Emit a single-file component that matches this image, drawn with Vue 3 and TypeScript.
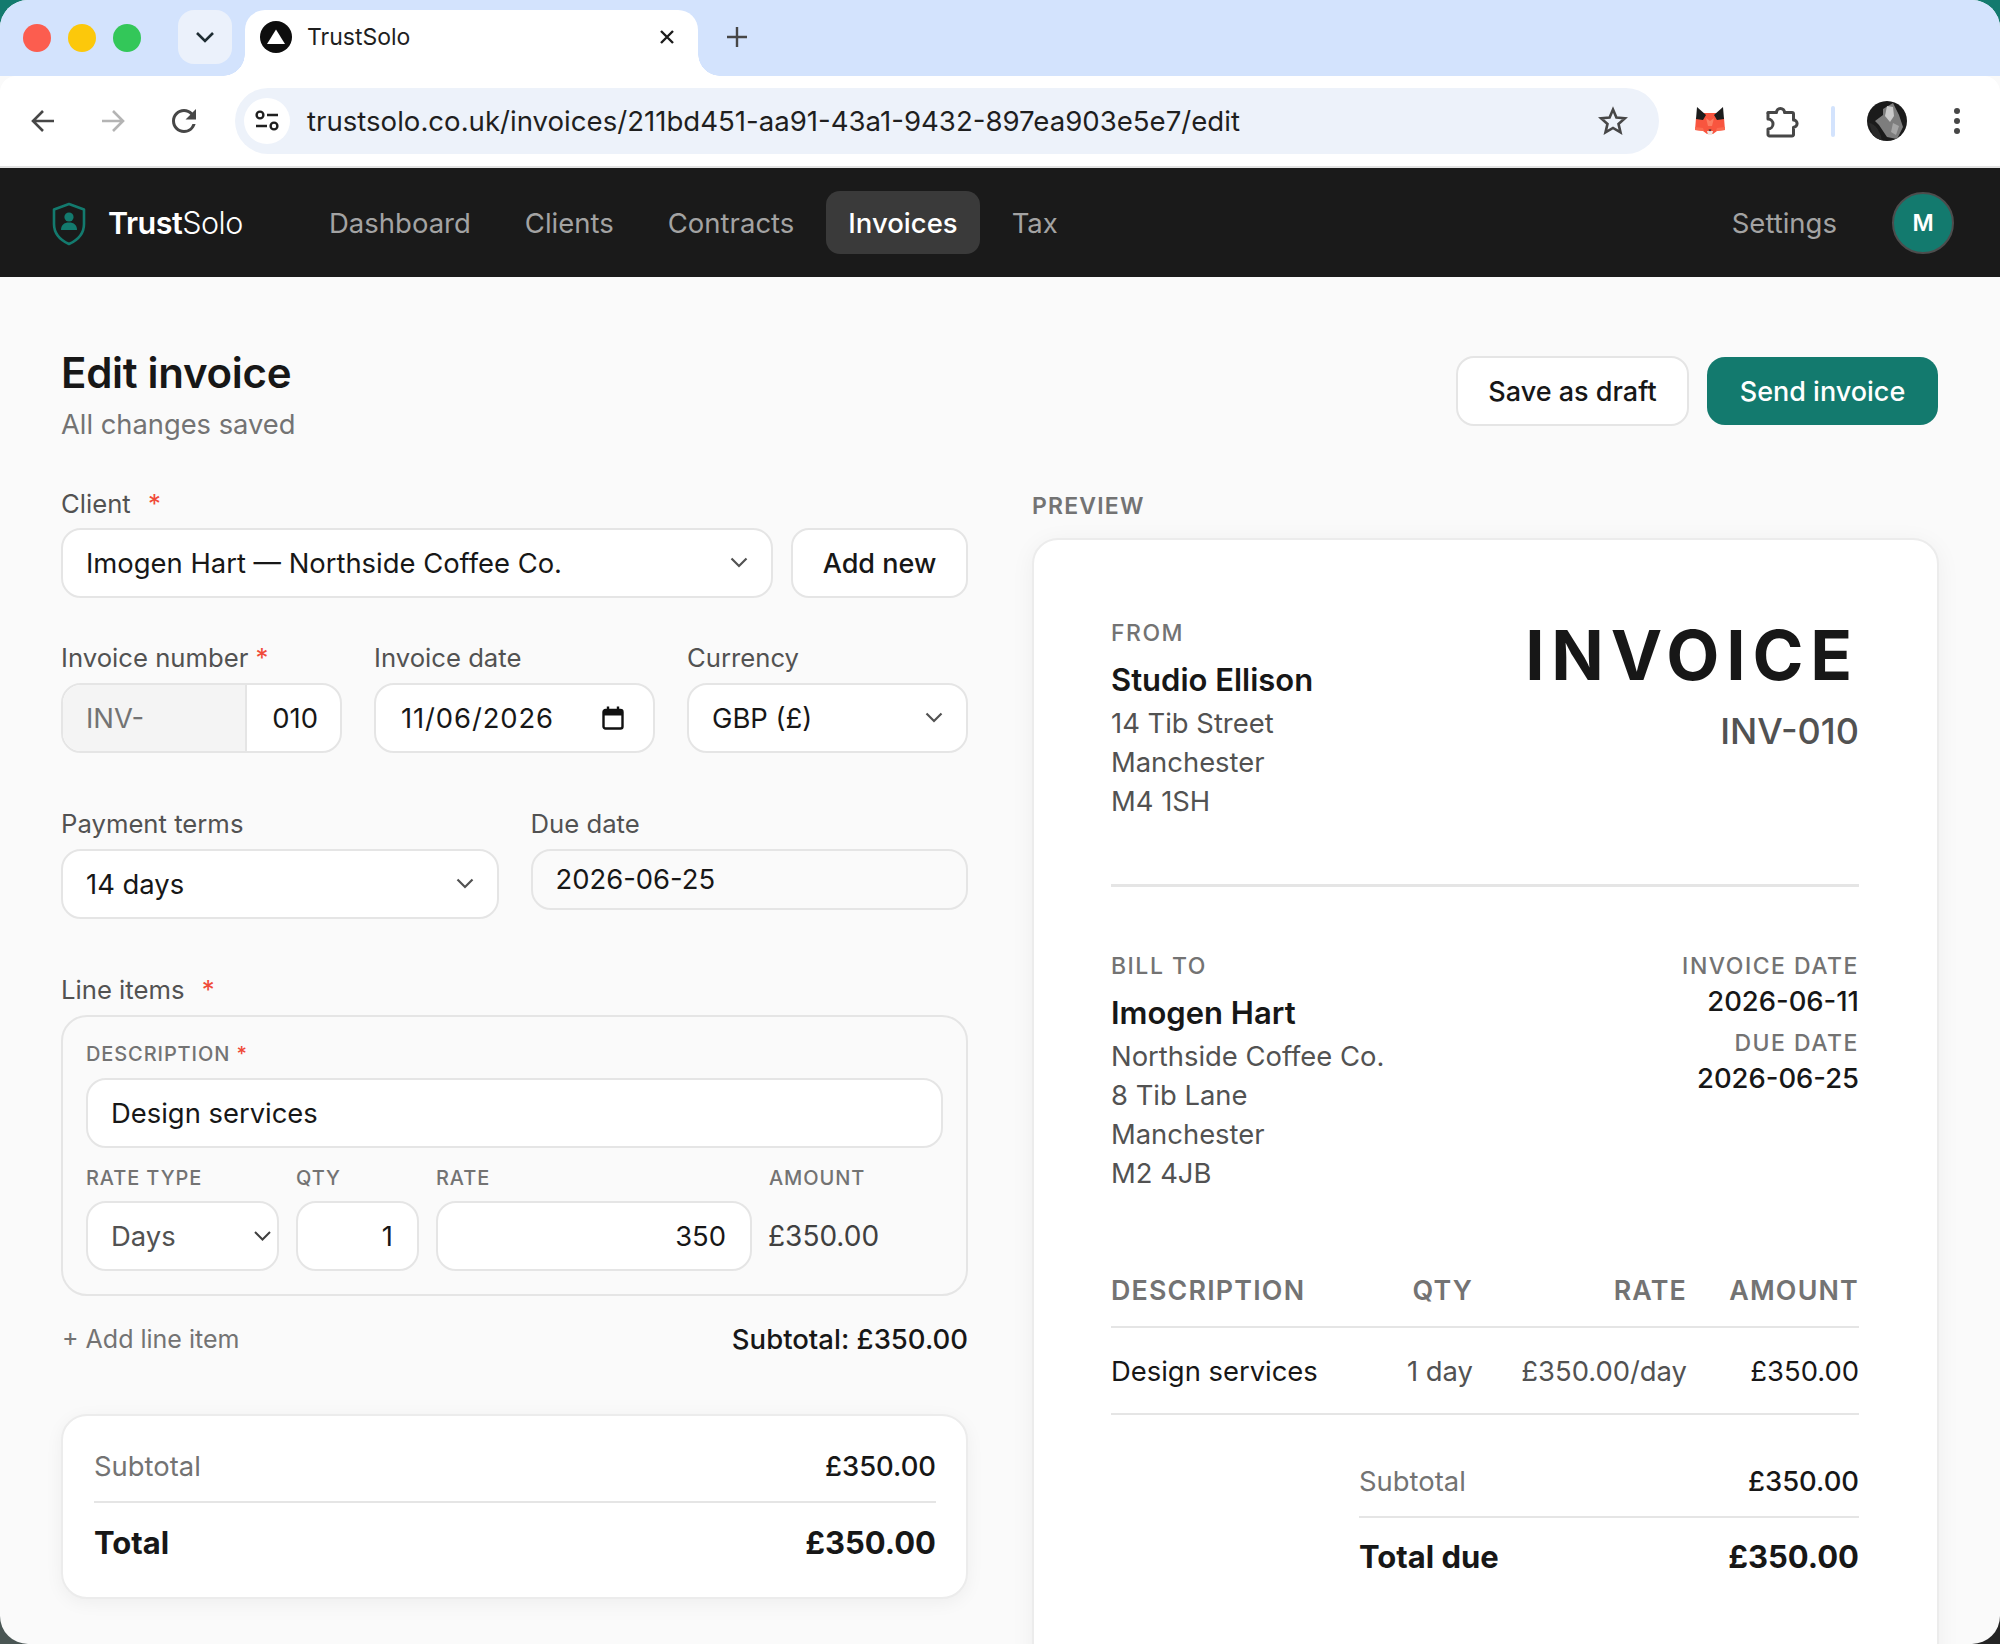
<script setup lang="ts">
const navLinks = [
  { label: 'Dashboard', active: false },
  { label: 'Clients', active: false },
  { label: 'Contracts', active: false },
  { label: 'Invoices', active: true },
  { label: 'Tax', active: false },
]

const fromLines = ['14 Tib Street', 'Manchester', 'M4 1SH']
const billLines = ['Northside Coffee Co.', '8 Tib Lane', 'Manchester', 'M2 4JB']
</script>

<template>
  <div class="desktop">
    <div class="window">
      <div class="tabstrip">
        <div class="lights">
          <span class="light light--red"></span>
          <span class="light light--yellow"></span>
          <span class="light light--green"></span>
        </div>
        <div class="tab-search">
          <svg width="20" height="12" viewBox="0 0 20 12" fill="none">
            <path d="M2 2l8 8 8-8" stroke="#1f2d33" stroke-width="2.6" />
          </svg>
        </div>
        <div class="tab">
          <svg class="favicon" width="32" height="32" viewBox="0 0 32 32">
            <circle cx="16" cy="16" r="16" fill="#0d0d0d" />
            <path d="M16 8.5L25 23H7z" fill="#fff" />
          </svg>
          <span class="tab__title">TrustSolo</span>
          <svg width="16" height="16" viewBox="0 0 16 16" fill="none">
            <path d="M2 2l12 12M14 2L2 14" stroke="#1c1c1c" stroke-width="2.4" />
          </svg>
        </div>
        <svg class="tab-new" width="20" height="20" viewBox="0 0 20 20" fill="none">
          <path d="M10 0v20M0 10h20" stroke="#474747" stroke-width="2.4" />
        </svg>
      </div>

      <div class="toolbar">
        <svg class="tool tool--back" width="24" height="24" viewBox="0 0 24 24" fill="none">
          <path d="M23 12H2M12 2L2 12l10 10" stroke="#474747" stroke-width="2.6" />
        </svg>
        <svg class="tool tool--forward" width="24" height="24" viewBox="0 0 24 24" fill="none">
          <path d="M1 12h21M12 2l10 10-10 10" stroke="#b4b4b4" stroke-width="2.6" />
        </svg>
        <svg class="tool tool--reload" width="24" height="24" viewBox="4 4 16 16">
          <path
            fill="#474747"
            d="M17.65 6.35A7.958 7.958 0 0 0 12 4c-4.42 0-7.99 3.58-7.99 8s3.57 8 7.99 8c3.73 0 6.84-2.55 7.73-6h-2.08A5.99 5.99 0 0 1 12 18c-3.31 0-6-2.69-6-6s2.69-6 6-6c1.66 0 3.14.69 4.22 1.78L13 11h7V4l-2.35 2.35z"
          />
        </svg>
        <div class="omnibox">
          <div class="site-info">
            <svg width="24" height="22" viewBox="0 0 24 22" fill="none" stroke="#1f1f1f" stroke-width="2.4">
              <circle cx="5" cy="5" r="3.4" />
              <path d="M12 5h11M1 16h11" />
              <circle cx="19" cy="16" r="3.4" />
            </svg>
          </div>
          <span class="omnibox__url">trustsolo.co.uk/invoices/211bd451-aa91-43a1-9432-897ea903e5e7/edit</span>
          <svg class="omnibox__star" width="30" height="30" viewBox="0 0 30 30" fill="none">
            <path
              d="M15 3.5l3.4 8 8.6.7-6.5 5.7 2 8.5-7.5-4.5-7.5 4.5 2-8.5L3 12.2l8.6-.7z"
              stroke="#474747"
              stroke-width="2.6"
              stroke-linejoin="miter"
            />
          </svg>
        </div>
        <svg class="fox" width="30" height="28" viewBox="0 0 30 28">
          <path d="M1 11l7-5h14l7 5 1 12-8 1-4 3h-6l-4-3-8-1z" fill="#f8553f" />
          <path d="M2 0l9 8-3 5-7-1zM28 0l-9 8 3 5 7-1z" fill="#1c1c1c" />
          <path d="M11 11l4 3 4-3-2 8h-4z" fill="#fb7d62" />
          <path d="M0 20l8 1 1 3-9-1zM30 20l-8 1-1 3 9-1z" fill="#fb6a50" />
          <path d="M12 24h6l-1 4h-4z" fill="#efe9e6" />
          <path d="M13.500 22.500h3L15 24.500z" fill="#2a2a2a" />
        </svg>
        <svg class="puzzle" width="34" height="33" viewBox="0 0 34 33" fill="none">
          <path
            d="M3 7.5h8.5a4 4 0 0 1 8 0H27a1.500 1.500 0 0 1 1.500 1.500v6a3.600 3.600 0 0 1 0 7.200V30a1.500 1.500 0 0 1-1.500 1H4.500A1.500 1.500 0 0 1 3 29.500V24a5 5 0 0 0 0-10V9a1.500 1.500 0 0 1 0-1.500z"
            stroke="#474747"
            stroke-width="3"
            stroke-linejoin="round"
          />
        </svg>
        <span class="tool-sep"></span>
        <svg class="profile" width="40" height="40" viewBox="0 0 40 40">
          <defs>
            <filter id="soft"><feGaussianBlur stdDeviation="0.7" /></filter>
            <clipPath id="round"><circle cx="20" cy="20" r="20" /></clipPath>
          </defs>
          <g clip-path="url(#round)">
            <rect width="40" height="40" fill="#1b1b1b" />
            <g filter="url(#soft)">
              <path d="M16 8l10-6 6 12 4 12-6 12-10-2-8-12-4-4 8-6z" fill="#7d7d7d" />
              <path d="M20 5l6 1 1 9-4 6-5-6z" fill="#c9c9c9" />
              <path d="M26 22l6 3-3 9-5-3z" fill="#a5a5a5" />
              <path d="M2 22c6 1 11 7 13 18l-8-3z" fill="#2b2b2b" />
            </g>
          </g>
        </svg>
        <svg class="kebab" width="8" height="28" viewBox="0 0 8 28">
          <circle cx="4" cy="4" r="3" fill="#474747" />
          <circle cx="4" cy="14" r="3" fill="#474747" />
          <circle cx="4" cy="24" r="3" fill="#474747" />
        </svg>
      </div>

      <header class="nav">
        <div class="brand">
          <svg class="brand__mark" width="34" height="44" viewBox="0 0 34 44" fill="none">
            <path
              d="M17 2l15 5.5V22c0 9-6 16-15 20C8 38 2 31 2 22V7.500z"
              stroke="#137a6e"
              stroke-width="2.6"
              stroke-linejoin="round"
            />
            <circle cx="17" cy="15" r="4.600" fill="#137a6e" />
            <path d="M9 28c0-5 3-7.500 8-7.500s8 2.500 8 7.500z" fill="#137a6e" />
          </svg>
          <span class="brand__name"><b>Trust</b>Solo</span>
        </div>
        <nav class="nav__links">
          <a
            v-for="link in navLinks"
            :key="link.label"
            class="nav__link"
            :class="{ 'nav__link--active': link.active }"
          >{{ link.label }}</a>
        </nav>
        <a class="nav__settings">Settings</a>
        <div class="avatar">M</div>
      </header>

      <main class="page">
        <div class="page__head">
          <div>
            <h1 class="page__title">Edit invoice</h1>
            <p class="page__status">All changes saved</p>
          </div>
          <div class="page__actions">
            <button class="btn btn--ghost">Save as draft</button>
            <button class="btn btn--primary">Send invoice</button>
          </div>
        </div>

        <div class="columns">
          <section class="form">
            <div class="field">
              <label class="label">Client <em class="req req--wide">*</em></label>
              <div class="row row--client">
                <div class="control control--select">
                  <span>Imogen Hart — Northside Coffee Co.</span>
                  <svg class="chev" width="18" height="11" viewBox="0 0 18 11" fill="none">
                    <path d="M1.500 1.500L9 9l7.500-7.500" stroke="#525252" stroke-width="2.200" />
                  </svg>
                </div>
                <button class="btn btn--add">Add new</button>
              </div>
            </div>

            <div class="row row--invoice">
              <div class="field">
                <label class="label">Invoice number <em class="req">*</em></label>
                <div class="control control--prefixed">
                  <span class="prefix">INV-</span>
                  <span class="suffix">010</span>
                </div>
              </div>
              <div class="field">
                <label class="label">Invoice date</label>
                <div class="control control--date">
                  <span class="date-value">11/06/2026</span>
                  <svg width="22" height="24" viewBox="0 0 22 24" fill="none">
                    <rect x="1.500" y="4" width="19" height="18.500" rx="2" stroke="#111" stroke-width="2.400" />
                    <path d="M1.500 5h19v4.500h-19z" fill="#111" />
                    <path d="M6 .5v4M16 .5v4" stroke="#111" stroke-width="2.400" />
                  </svg>
                </div>
              </div>
              <div class="field">
                <label class="label">Currency</label>
                <div class="control control--select">
                  <span>GBP (£)</span>
                  <svg class="chev" width="18" height="11" viewBox="0 0 18 11" fill="none">
                    <path d="M1.500 1.500L9 9l7.500-7.500" stroke="#525252" stroke-width="2.200" />
                  </svg>
                </div>
              </div>
            </div>

            <div class="row row--terms">
              <div class="field">
                <label class="label">Payment terms</label>
                <div class="control control--select">
                  <span>14 days</span>
                  <svg class="chev" width="18" height="11" viewBox="0 0 18 11" fill="none">
                    <path d="M1.500 1.500L9 9l7.500-7.500" stroke="#525252" stroke-width="2.200" />
                  </svg>
                </div>
              </div>
              <div class="field">
                <label class="label">Due date</label>
                <div class="control control--short">2026-06-25</div>
              </div>
            </div>

            <div class="field field--lines">
              <label class="label">Line items <em class="req req--wide">*</em></label>
              <div class="line-card">
                <label class="micro">DESCRIPTION <em class="req">*</em></label>
                <div class="control control--desc">Design services</div>
                <div class="line-grid">
                  <label class="micro">RATE TYPE</label>
                  <label class="micro">QTY</label>
                  <label class="micro">RATE</label>
                  <label class="micro">AMOUNT</label>
                  <div class="control control--select control--days">
                    <span>Days</span>
                    <svg width="17" height="10" viewBox="0 0 17 10" fill="none">
                      <path d="M1 1l7.500 7.500L16 1" stroke="#3f3f3f" stroke-width="2" />
                    </svg>
                  </div>
                  <div class="control control--num">1</div>
                  <div class="control control--num">350</div>
                  <div class="line-amount">£350.00</div>
                </div>
              </div>
              <div class="line-foot">
                <a class="add-line">+ Add line item</a>
                <span class="line-subtotal">Subtotal: £350.00</span>
              </div>
            </div>

            <div class="summary">
              <div class="summary__row">
                <span class="muted">Subtotal</span>
                <span>£350.00</span>
              </div>
              <div class="summary__row summary__row--total">
                <span>Total</span>
                <span>£350.00</span>
              </div>
            </div>
          </section>

          <section class="preview">
            <div class="preview__label">PREVIEW</div>
            <article class="sheet">
              <div class="sheet__top">
                <div>
                  <div class="caps">FROM</div>
                  <div class="party">Studio Ellison</div>
                  <div v-for="line in fromLines" :key="line" class="addr">{{ line }}</div>
                </div>
                <div class="sheet__title">
                  <div class="big">INVOICE</div>
                  <div class="number">INV-010</div>
                </div>
              </div>

              <div class="sheet__bill">
                <div>
                  <div class="caps">BILL TO</div>
                  <div class="party">Imogen Hart</div>
                  <div v-for="line in billLines" :key="line" class="addr">{{ line }}</div>
                </div>
                <div class="dates">
                  <div class="caps">INVOICE DATE</div>
                  <div class="date">2026-06-11</div>
                  <div class="caps caps--second">DUE DATE</div>
                  <div class="date">2026-06-25</div>
                </div>
              </div>

              <div class="table">
                <div class="table__row table__row--head">
                  <span>DESCRIPTION</span>
                  <span>QTY</span>
                  <span>RATE</span>
                  <span>AMOUNT</span>
                </div>
                <div class="table__row table__row--body">
                  <span class="strong">Design services</span>
                  <span>1 day</span>
                  <span>£350.00/day</span>
                  <span class="strong">£350.00</span>
                </div>
              </div>

              <div class="totals">
                <div class="totals__row">
                  <span class="muted">Subtotal</span>
                  <span>£350.00</span>
                </div>
                <div class="totals__row totals__row--due">
                  <span>Total due</span>
                  <span>£350.00</span>
                </div>
              </div>
            </article>
          </section>
        </div>
      </main>
    </div>
  </div>
</template>

<style>
html,
body {
  margin: 0;
  background: #222;
}
</style>

<style scoped>
* {
  box-sizing: border-box;
}

.desktop {
  width: 2000px;
  height: 1644px;
  font-family: Inter, 'Liberation Sans', sans-serif;
  color: #171717;
  background:
    linear-gradient(#137a6e, #137a6e) 0 0 / 100% 50% no-repeat,
    linear-gradient(#4a5654, #4a5654) 0 100% / 50% 50% no-repeat,
    linear-gradient(#242424, #242424) 100% 100% / 50% 50% no-repeat;
}

.window {
  height: 100%;
  overflow: hidden;
  border-radius: 28px;
  background: #fafafa;
}

/* browser chrome */
.tabstrip {
  height: 76px;
  background: #d3e3fd;
  display: flex;
  align-items: flex-start;
}

.lights {
  display: flex;
  gap: 17px;
  padding: 24px 0 0 23px;
}

.light {
  width: 28px;
  height: 28px;
  border-radius: 50%;
}

.light--red {
  background: #fc5d4f;
}

.light--yellow {
  background: #fcc80b;
}

.light--green {
  background: #33c759;
}

.tab-search {
  width: 54px;
  height: 54px;
  margin: 10px 0 0 37px;
  border-radius: 16px;
  background: #ebf1fb;
  display: flex;
  align-items: center;
  justify-content: center;
}

.tab {
  position: relative;
  width: 453px;
  height: 66px;
  margin: 10px 0 0 13px;
  padding: 0 23px 12px 15px;
  background: #fff;
  border-radius: 20px 20px 0 0;
  display: flex;
  align-items: center;
}

.tab::before,
.tab::after {
  content: '';
  position: absolute;
  bottom: 0;
  width: 22px;
  height: 22px;
}

.tab::before {
  left: -22px;
  background: radial-gradient(circle at 0 0, transparent 21.500px, #fff 22px);
}

.tab::after {
  right: -22px;
  background: radial-gradient(circle at 100% 0, transparent 21.500px, #fff 22px);
}

.tab__title {
  flex: 1;
  margin-left: 15px;
  font-size: 23px;
  color: #1f1f1f;
}

.tab-new {
  margin: 27px 0 0 29px;
}

.toolbar {
  height: 92px;
  background: #fff;
  border-radius: 16px 16px 0 0;
  border-bottom: 2px solid #e2e2e2;
  display: flex;
  align-items: center;
}

.tool--back {
  margin-left: 31px;
}

.tool--forward {
  margin-left: 46px;
}

.tool--reload {
  margin-left: 47px;
}

.omnibox {
  width: 1424px;
  height: 66px;
  margin-left: 39px;
  padding: 0 31px 0 9px;
  border-radius: 33px;
  background: #edf2fa;
  display: flex;
  align-items: center;
}

.site-info {
  width: 46px;
  height: 46px;
  border-radius: 50%;
  background: #fff;
  display: flex;
  align-items: center;
  justify-content: center;
}

.omnibox__url {
  flex: 1;
  margin-left: 17px;
  font-size: 27.6px;
  color: #1f1f1f;
}

.fox {
  margin-left: 36px;
}

.puzzle {
  margin-left: 40px;
}

.tool-sep {
  width: 4px;
  height: 31px;
  margin-left: 32px;
  border-radius: 2px;
  background: #d3e3fd;
}

.profile {
  margin-left: 32px;
}

.kebab {
  margin-left: 46px;
}

/* app nav */
.nav {
  height: 109px;
  background: #1a1a1a;
  display: flex;
  align-items: center;
  padding: 0 46px 0 52px;
}

.brand {
  display: flex;
  align-items: center;
  gap: 22px;
  width: 255px;
}

.brand__mark {
  margin-top: 3px;
}

.brand__name {
  font-size: 30.5px;
  letter-spacing: -0.5px;
  color: #fff;
  font-weight: 300;
}

.brand__name b {
  font-weight: 600;
}

.nav__links {
  flex: 1;
  display: flex;
  gap: 10px;
}

.nav__link {
  height: 63px;
  padding: 0 22px;
  border-radius: 14px;
  font-size: 27.5px;
  color: #a3a3a3;
  display: flex;
  align-items: center;
}

.nav__link--active {
  background: #3a3a3a;
  color: #fff;
  font-weight: 500;
}

.nav__settings {
  font-size: 27.5px;
  color: #a3a3a3;
  margin-right: 55px;
}

.avatar {
  width: 62px;
  height: 62px;
  border-radius: 50%;
  background: #137a6e;
  border: 2px solid #4d4d4d;
  color: #fff;
  font-size: 23px;
  font-weight: 600;
  display: flex;
  align-items: center;
  justify-content: center;
}

/* page */
.page {
  padding: 72px 61px 0;
}

.page__head {
  display: flex;
  justify-content: space-between;
  height: 139px;
}

.page__title {
  margin: 0;
  font-size: 42px;
  line-height: 48px;
  font-weight: 600;
  letter-spacing: -0.3px;
}

.page__status {
  margin: 10px 0 0;
  font-size: 27.3px;
  line-height: 36px;
  color: #737373;
}

.page__actions {
  display: flex;
  gap: 18px;
  padding: 7px 1px 0 0;
  align-items: flex-start;
}

.btn {
  height: 70px;
  border-radius: 18px;
  font-family: inherit;
  font-size: 27px;
  font-weight: 500;
}

.btn--ghost,
.btn--add {
  background: #fff;
  border: 2px solid #e5e5e5;
  color: #171717;
}

.btn--ghost {
  width: 233px;
}

.btn--primary {
  width: 231px;
  height: 68px;
  margin-top: 1px;
  background: #137a6e;
  border: none;
  color: #fff;
}

.columns {
  display: grid;
  grid-template-columns: 1fr 1fr;
  gap: 64px;
}

.field {
  display: flex;
  flex-direction: column;
  min-width: 0;
}

.label {
  height: 32px;
  margin-bottom: 8px;
  font-size: 25.7px;
  line-height: 31px;
  color: #525252;
}

.req {
  font-style: normal;
  color: #f04a38;
}

.req--wide {
  margin-left: 10px;
}

.row {
  display: grid;
}

.row--client {
  grid-template-columns: 1fr 177px;
  gap: 18px;
}

.row--invoice {
  grid-template-columns: 281px 281px 1fr;
  gap: 32px;
  margin-top: 44px;
}

.row--invoice .label,
.row--terms .label {
  margin-bottom: 9px;
}

.row--terms {
  grid-template-columns: 1fr 1fr;
  gap: 32px;
  margin-top: 55px;
  align-items: start;
}

.control {
  height: 70px;
  background: #fff;
  border: 2px solid #e5e5e5;
  border-radius: 20px;
  font-size: 27.4px;
  display: flex;
  align-items: center;
  padding: 0 24px 1px 23px;
}

.control--select {
  justify-content: space-between;
  padding-right: 23px;
}

.control--prefixed {
  padding: 0;
  overflow: hidden;
}

.prefix {
  width: 184px;
  height: 100%;
  padding-left: 23px;
  background: #f4f4f4;
  border-right: 2px solid #e5e5e5;
  color: #737373;
  display: flex;
  align-items: center;
}

.suffix {
  flex: 1;
  text-align: right;
  padding-right: 22px;
}

.control--date {
  justify-content: space-between;
  padding-left: 25px;
  padding-right: 29px;
}

.date-value {
  letter-spacing: 0.9px;
}

.control--short {
  height: 61px;
  background: #fafafa;
}

.field--lines {
  margin-top: 54px;
}

.field--lines > .label {
  margin-bottom: 10px;
  line-height: 33px;
}

.line-card {
  height: 281px;
  border: 2px solid #e5e5e5;
  border-radius: 26px;
  padding: 25px 23px 0;
}

.micro {
  display: block;
  height: 24px;
  font-size: 20px;
  line-height: 24px;
  font-weight: 500;
  letter-spacing: 0.9px;
  color: #737373;
}

.control--desc {
  margin: 12px 0 18px;
}

.line-grid {
  display: grid;
  grid-template-columns: 193px 123px 316px 1fr;
  column-gap: 17px;
  row-gap: 11px;
}

.control--days {
  color: #525252;
  padding-right: 6px;
}

.control--num {
  justify-content: flex-end;
}

.line-amount {
  font-size: 28px;
  display: flex;
  align-items: center;
  color: #404040;
  margin-left: -1px;
}

.line-foot {
  height: 32px;
  margin-top: 27px;
  display: flex;
  align-items: center;
  justify-content: space-between;
}

.add-line {
  margin-left: 1px;
  font-size: 25px;
  color: #737373;
}

.line-subtotal {
  font-size: 27.5px;
  font-weight: 500;
}

.summary {
  height: 185px;
  margin-top: 59px;
  padding: 14px 30px 0 31px;
  background: #fff;
  border: 2px solid #ececec;
  border-radius: 26px;
  box-shadow: 0 4px 18px rgba(0, 0, 0, 0.05);
}

.summary__row {
  height: 73px;
  display: flex;
  align-items: center;
  justify-content: space-between;
  font-size: 27.4px;
  font-weight: 500;
  border-bottom: 2px solid #e5e5e5;
}

.summary__row--total {
  height: 78px;
  border-bottom: none;
  font-size: 31px;
  font-weight: 700;
}

.muted {
  color: #737373;
  font-weight: 400;
}

/* preview */
.preview {
  margin-top: 1px;
  min-width: 0;
}

.preview__label {
  height: 35px;
  font-size: 23px;
  line-height: 35px;
  font-weight: 600;
  letter-spacing: 1.2px;
  color: #737373;
}

.sheet {
  height: 1200px;
  margin-top: 14px;
  padding: 78px 78px 0 77px;
  background: #fff;
  border: 2px solid #ececec;
  border-radius: 26px;
  box-shadow: 0 4px 24px rgba(0, 0, 0, 0.05);
}

.sheet__top {
  display: flex;
  justify-content: space-between;
  height: 269px;
  border-bottom: 3px solid #e5e5e5;
}

.caps {
  height: 30px;
  font-size: 23px;
  line-height: 30px;
  font-weight: 500;
  letter-spacing: 1.5px;
  color: #737373;
}

.party {
  margin-top: 12px;
  height: 40px;
  font-size: 31px;
  line-height: 40px;
  font-weight: 600;
}

.addr {
  height: 39px;
  font-size: 27.4px;
  line-height: 39px;
  color: #525252;
}

.party + .addr {
  margin-top: 4px;
}

.sheet__title {
  text-align: right;
}

.big {
  margin-top: -3px;
  font-size: 69px;
  line-height: 80px;
  font-weight: 700;
  letter-spacing: 6.8px;
}

.number {
  margin-top: 14px;
  font-size: 36px;
  line-height: 44px;
  font-weight: 500;
  color: #525252;
}

.sheet__bill {
  display: flex;
  justify-content: space-between;
  padding-top: 64px;
  height: 385px;
}

.dates {
  text-align: right;
}

.date {
  height: 36px;
  margin-top: 2px;
  font-size: 27.4px;
  line-height: 36px;
  font-weight: 500;
}

.caps--second {
  margin-top: 9px;
}

.table__row {
  display: grid;
  grid-template-columns: 1fr 130px 214px 172px;
}

.table__row > span {
  text-align: right;
}

.table__row > span:first-child {
  text-align: left;
}

.table__row--head {
  height: 56px;
  padding-bottom: 18px;
  align-items: center;
  font-size: 26.8px;
  font-weight: 600;
  letter-spacing: 1.2px;
  color: #737373;
  border-bottom: 2px solid #e5e5e5;
}

.table__row--body {
  height: 87px;
  align-items: center;
  font-size: 27.4px;
  color: #525252;
  border-bottom: 2px solid #e5e5e5;
}

.strong {
  color: #171717;
}

.totals {
  margin: 31px 0 0 auto;
  width: 500px;
}

.totals__row {
  height: 72px;
  display: flex;
  align-items: center;
  justify-content: space-between;
  font-size: 27.4px;
  font-weight: 500;
  border-bottom: 2px solid #e5e5e5;
}

.totals__row--due {
  height: 77px;
  border-bottom: none;
  font-size: 31px;
  font-weight: 700;
}
</style>
